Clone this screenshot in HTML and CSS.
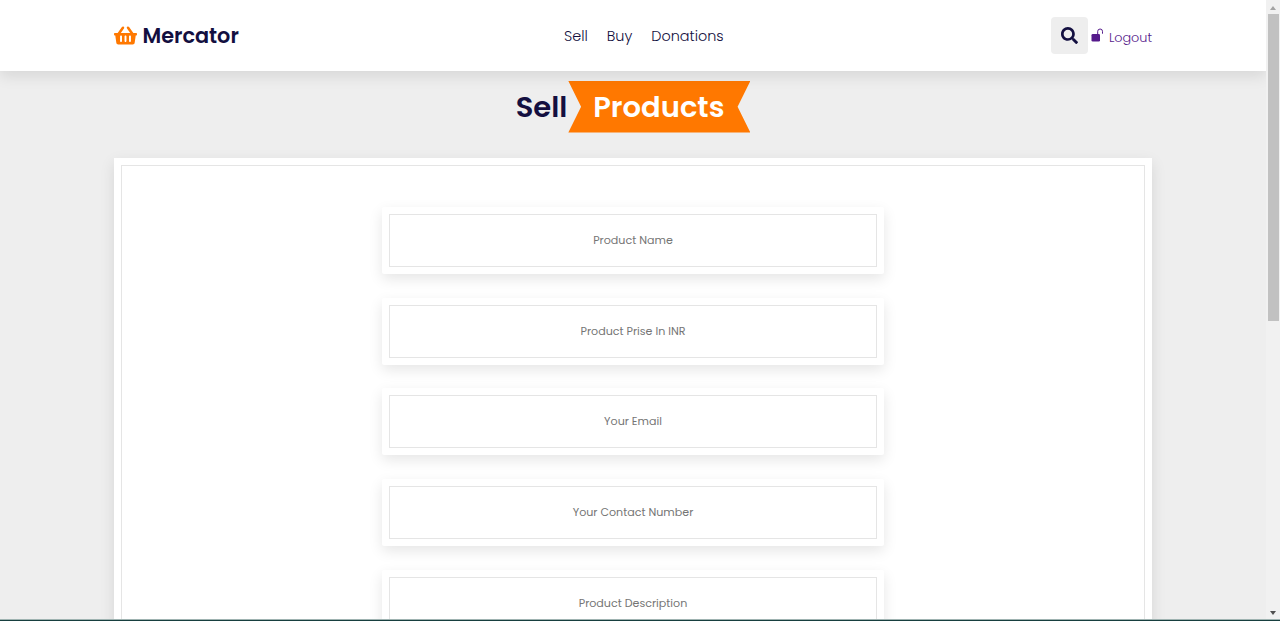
FILE: index.html
```
<!DOCTYPE html>
<html lang="en">
	<head>
		<meta charset="UTF-8">
		<title>Mercator</title>
		<link rel="stylesheet" href="styles.css">
	</head>
	<body>
		<div class="window">
			<div class="page">
				<header class="header">
					<a href="#" class="logo">
						<svg class="basket" viewBox="0 0 576 512"><path fill-rule="evenodd" d="M576 216v16c0 13.3-10.700 24-24 24h-8l-26.100 182.800C514.500 462.400 494.300 480 470.400 480H105.600c-23.900 0-44.100-17.600-47.500-41.200L32 256h-8c-13.300 0-24-10.700-24-24v-16c0-13.300 10.700-24 24-24h67.300l106.800-146.800c10.400-14.300 30.400-17.500 44.700-7.100 14.300 10.400 17.500 30.400 7.100 44.700L170.500 192h235.100L326.100 82.800c-10.400-14.300-7.200-34.300 7.100-44.700 14.300-10.400 34.300-7.200 44.700 7.100L484.700 192H552c13.300 0 24 10.700 24 24zM312 392V280c0-13.300-10.700-24-24-24s-24 10.700-24 24v112c0 13.300 10.700 24 24 24s24-10.700 24-24zm112 0V280c0-13.300-10.700-24-24-24s-24 10.700-24 24v112c0 13.300 10.700 24 24 24s24-10.700 24-24zm-224 0V280c0-13.300-10.700-24-24-24s-24 10.700-24 24v112c0 13.300 10.700 24 24 24s24-10.700 24-24z"/></svg>
						<span>Mercator</span>
					</a>
					<nav class="navbar">
						<a href="#">Sell</a>
						<a href="#">Buy</a>
						<a href="#">Donations</a>
					</nav>
					<div class="icons">
						<div class="search-btn">
							<svg viewBox="0 0 512 512"><path d="M505 442.700L405.300 343c-4.500-4.500-10.600-7-17-7H372c27.600-35.300 44-79.700 44-128C416 93.100 322.900 0 208 0S0 93.100 0 208s93.100 208 208 208c48.300 0 92.700-16.400 128-44v16.300c0 6.400 2.500 12.500 7 17l99.700 99.700c9.400 9.400 24.600 9.400 33.900 0l28.300-28.300c9.400-9.400 9.400-24.600.1-34zM208 336c-70.700 0-128-57.200-128-128 0-70.700 57.200-128 128-128 70.700 0 128 57.200 128 128 0 70.700-57.200 128-128 128z"/></svg>
						</div>
						<a href="#" class="logout">
							<svg class="unlock" viewBox="0 0 13 14"><rect x="0.500" y="6" width="8.500" height="7.500" rx="1.300"/><path d="M6.700 6V3.400a2.400 2.400 0 0 1 4.800 0V5.700"/></svg>
							<span>Logout</span>
						</a>
					</div>
				</header>
				<section class="sell">
					<h1 class="heading"><b>Sell</b><span>Products</span></h1>
					<form class="form">
						<input type="text" class="box" placeholder="Product Name">
						<input type="text" class="box" placeholder="Product Prise In INR">
						<input type="text" class="box" placeholder="Your Email">
						<input type="text" class="box" placeholder="Your Contact Number">
						<input type="text" class="box" placeholder="Product Description">
					</form>
				</section>
			</div>
			<div class="scrollbar">
				<i class="up"></i>
				<div class="thumb"></div>
				<i class="down"></i>
			</div>
		</div>
		<div class="edge"></div>
	</body>
</html>
```
FILE: styles.css
```
*{
	margin: 0;
	padding: 0;
	box-sizing: border-box;
	font-family: Poppins, Inter, "Liberation Sans", sans-serif;
	text-decoration: none;
	outline: none;
	border: none;
}
body{
	height: 621px;
	overflow: hidden;
	background: #eee;
}
.window{
	display: flex;
	height: 619px;
}
.page{
	flex: 1;
	overflow: hidden;
}
.header{
	position: relative;
	z-index: 1;
	display: flex;
	align-items: center;
	height: 70.5px;
	padding: 0 114px;
	background: #fff;
	box-shadow: 0 5px 14px rgba(0,0,0,0.1);
}
.logo{
	display: flex;
	align-items: center;
	width: 450px;
	color: #130f40;
	font-size: 20.8px;
	font-weight: 600;
}
.basket{
	width: 23px;
	height: 21px;
	margin-right: 5.5px;
	fill: #ff7800;
}
.navbar{
	display: flex;
	gap: 19px;
	flex: 1;
	padding-top: 2px;
	font-size: 14.4px;
	font-weight: 300;
}
.navbar a{
	color: #130f40;
}
.icons{
	display: flex;
	align-items: center;
}
.search-btn{
	display: flex;
	align-items: center;
	justify-content: center;
	width: 37px;
	height: 37px;
	border-radius: 4px;
	background: #eee;
}
.search-btn svg{
	width: 17px;
	height: 17px;
	fill: #130f40;
}
.logout{
	display: flex;
	align-items: center;
	margin-left: 3px;
	color: #551a8b;
	font-size: 12.8px;
	font-weight: 300;
}
.logout span{
	margin-top: 5px;
}
.unlock{
	width: 13px;
	height: 14px;
	margin-right: 5px;
	fill: #551a8b;
}
.unlock path{
	fill: none;
	stroke: #551a8b;
	stroke-width: 1;
}
.sell{
	padding: 10.5px 114px 0;
}
.heading{
	display: flex;
	align-items: center;
	justify-content: center;
	height: 51.5px;
	color: #130f40;
	font-size: 29px;
	line-height: 51px;
}
.heading b{
	padding-top: 2px;
	font-weight: 600;
}
.heading span{
	width: 182px;
	height: 51.5px;
	margin-left: 1px;
	padding: 1px 1px 0 0;
	background: #ff7800;
	color: #fff;
	font-weight: 600;
	text-align: center;
	clip-path: polygon(100% 0, 93% 50%, 100% 100%, 0 100%, 7% 50%, 0 0);
}
.form{
	display: flex;
	flex-direction: column;
	align-items: center;
	gap: 23.95px;
	height: 700px;
	margin-top: 25.5px;
	padding-top: 49px;
	background: #fff;
	outline: 1px solid rgba(0,0,0,0.1);
	outline-offset: -8px;
	box-shadow: 0 5px 14px rgba(0,0,0,0.1);
}
.box{
	flex: none;
	width: 502px;
	height: 66.8px;
	border-radius: 2px;
	background: #fff;
	outline: 1px solid rgba(0,0,0,0.1);
	outline-offset: -8px;
	box-shadow: 0 5px 14px rgba(0,0,0,0.1);
	font-size: 11.1px;
	text-align: center;
}
.box::placeholder{
	color: #757575;
}
.scrollbar{
	display: flex;
	flex-direction: column;
	align-items: center;
	width: 14px;
	padding: 6px 0 4px;
	background: #f1f1f1;
}
.thumb{
	width: 11px;
	height: 307px;
	margin: 4px 0 auto;
	background: #c1c1c1;
}
.up,.down{
	border: 3px solid transparent;
}
.up{
	border-top: none;
	border-bottom: 4px solid #a3a3a3;
}
.down{
	border-bottom: none;
	border-top: 4px solid #505050;
}
.edge{
	height: 2px;
	border-top: 1px solid #9fb3b1;
	background: #173f3f;
}
```
